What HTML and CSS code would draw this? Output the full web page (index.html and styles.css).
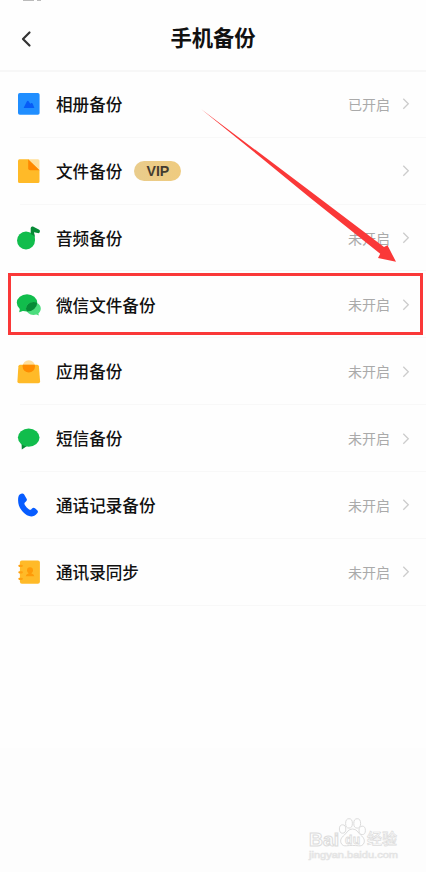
FILE: index.html
```html
<!DOCTYPE html>
<html lang="zh-CN">
<head>
<meta charset="utf-8">
<title>手机备份</title>
<link rel="stylesheet" href="styles.css">
</head>
<body>
<main class="screen">
  <header class="header">
    <svg class="back" viewBox="0 0 12 18"><path d="M9.5 2.5 3 9l6.5 6.5"/></svg>
    <h1 class="title">手机备份</h1>
    <span class="clip-a"></span><span class="clip-b"></span>
  </header>
  <ul class="list">
    <li class="row">
      <svg class="icon" viewBox="0 0 28 28"><rect x="3" y="3" width="21.6" height="21.7" rx="1.8" fill="#208eff"/><path d="M8.6 18 11.8 11.6q.9-1.8 2 0l1.4 2.1 1.2-.7q.8-.3 1.2.5l1.8 4.5z" fill="#075cf7"/></svg>
      <span class="name">相册备份</span><span class="status">已开启</span>
      <svg class="chevron" viewBox="0 0 8 14"><path d="m1.3 1.8 5 5-5 5"/></svg>
    </li>
    <li class="row">
      <svg class="icon" viewBox="0 0 28 28"><path d="M4.5 2.3H13.5L24.5 13V24.5q0 1.6-1.6 1.6H4.6Q3 26.1 3 24.5V3.9q0-1.6 1.5-1.6z" fill="#ffba28"/><path d="M13 2.3h9.9q1.6 0 1.6 1.6V13z" fill="#ffdf9b"/><path d="M13.2 2.3 24.5 13.2h-9.3q-2 0-2-2z" fill="#ff8800"/></svg>
      <span class="name">文件备份</span><span class="vip">VIP</span><span class="status"></span>
      <svg class="chevron" viewBox="0 0 8 14"><path d="m1.3 1.8 5 5-5 5"/></svg>
    </li>
    <li class="row">
      <svg class="icon" viewBox="0 0 28 28"><circle cx="11" cy="16.5" r="9" fill="#11bd4c"/><path d="m15.7 8.5 3.1-.2q1.1 4 1.2 8.2h-4z" fill="#11bd4c"/><path d="M15.7 4q.3-2 2.3-1.4l5.8 2.9q1.4.6 1.1 2.3-.4 1.7-2.1 1.3l-3.9-.8 1 4.8q-1.5-2.2-4.2-3.2z" fill="#078b36"/></svg>
      <span class="name">音频备份</span><span class="status">未开启</span>
      <svg class="chevron" viewBox="0 0 8 14"><path d="m1.3 1.8 5 5-5 5"/></svg>
    </li>
    <li class="row">
      <svg class="icon" viewBox="0 0 28 28"><defs><clipPath id="bubble"><ellipse cx="12" cy="11.8" rx="10.2" ry="8.6"/></clipPath></defs><ellipse cx="12" cy="11.8" rx="10.2" ry="8.6" fill="#11bd4c"/><path d="m5 17-.8 4.3 5-1.8z" fill="#11bd4c"/><path d="M25.8 17.5c0 2-1 3.7-2.4 4.9l.5 2.2-2.7-1.1c-5 1.6-10.2-1.6-10.2-6 0-3.7 3.3-6.3 7.4-6.3s7.4 2.6 7.4 6.3z" fill="#4cdd7d"/><ellipse cx="18.4" cy="17.4" rx="7.4" ry="6.3" fill="#078b36" clip-path="url(#bubble)"/></svg>
      <span class="name">微信文件备份</span><span class="status">未开启</span>
      <svg class="chevron" viewBox="0 0 8 14"><path d="m1.3 1.8 5 5-5 5"/></svg>
    </li>
    <li class="row">
      <svg class="icon" viewBox="0 0 28 28"><defs><clipPath id="bag"><path d="M0 6.8h28V28H0z"/></clipPath></defs><circle cx="13.8" cy="8.4" r="6.2" fill="#ffdf9b"/><path d="M5 6.8h17.2q1.5 0 1.7 1.5l1.2 15q.1 1.9-1.8 1.9H4.2q-1.9 0-1.8-1.9l1-15Q3.5 6.8 5 6.8z" fill="#ffba28"/><circle cx="13.8" cy="8.4" r="6.2" fill="#ff8c00" clip-path="url(#bag)"/></svg>
      <span class="name">应用备份</span><span class="status">未开启</span>
      <svg class="chevron" viewBox="0 0 8 14"><path d="m1.3 1.8 5 5-5 5"/></svg>
    </li>
    <li class="row">
      <svg class="icon" viewBox="0 0 28 28"><path d="M6.5 17 6.8 24.6 13.5 20z" fill="#078b36"/><ellipse cx="13.7" cy="12.6" rx="10.8" ry="9.1" fill="#11bd4c"/></svg>
      <span class="name">短信备份</span><span class="status">未开启</span>
      <svg class="chevron" viewBox="0 0 8 14"><path d="m1.3 1.8 5 5-5 5"/></svg>
    </li>
    <li class="row">
      <svg class="icon" viewBox="0 0 28 28"><path d="M4.7 3.5C6.3 2.2 8.2 2 9 3.3l2.6 4.4c.7 1.2.2 2.2-.9 3l-.8.7c-.8.7-.6 1.8.1 2.9 1 1.5 2.3 2.9 3.8 3.9 1 .7 1.9.8 2.6 0l.6-.7c1-1 2-1 3-.2l2.2 2c1 .9.9 2 0 3-4.4 5.3-10 3.2-14.2-1.2-3.3-3.5-5-7.8-4.9-12 0-2.2.2-4.4 1.6-5.6z" fill="#075cff"/></svg>
      <span class="name">通话记录备份</span><span class="status">未开启</span>
      <svg class="chevron" viewBox="0 0 8 14"><path d="m1.3 1.8 5 5-5 5"/></svg>
    </li>
    <li class="row">
      <svg class="icon" viewBox="0 0 28 28"><rect x="4.9" y="2.5" width="20" height="23.2" rx="2" fill="#ffba28"/><path d="M4.4 7.8h2.4M4.4 14.3h2.4M4.4 20.8h2.4" stroke="#ffa010" stroke-width="2.2" stroke-linecap="round"/><circle cx="15" cy="12.2" r="3" fill="#ff9a08"/><path d="M13.5 14h3v1.4q2.4.4 2.8 2.8h-8.6q.4-2.4 2.8-2.8z" fill="#ff9a08"/></svg>
      <span class="name">通讯录同步</span><span class="status">未开启</span>
      <svg class="chevron" viewBox="0 0 8 14"><path d="m1.3 1.8 5 5-5 5"/></svg>
    </li>
  </ul>
  <div class="highlight"></div>
  <svg class="arrow" viewBox="0 0 196 154"><path d="M0 0 109 82 183 138 186.5 136.3 195 152.8 177 149 179.2 144.8 109 88.8 58 47z"/></svg>
  <div class="watermark">
    <svg class="mark" viewBox="0 0 90 42">
      <g class="outline">
        <text x="0" y="27.5" class="latin" textLength="30" lengthAdjust="spacingAndGlyphs">Bai</text>
        <path d="M43.5 11c-4.4 0-5.5 3.7-8 5.9-3.4 2.8-4.5 5.2-3.5 8 1 2.6 3.2 3.2 5.5 2.9 4-.5 8-.5 12 0 2.3.3 4.5-.3 5.5-2.9 1-2.8-.1-5.2-3.5-8-2.5-2.2-3.6-5.9-8-5.9z"/>
        <ellipse cx="33.6" cy="11" rx="3.2" ry="4.2"/><ellipse cx="40" cy="5.4" rx="3.4" ry="4.7"/><ellipse cx="48.2" cy="5.4" rx="3.4" ry="4.7"/><ellipse cx="53.2" cy="12.4" rx="3.2" ry="4.2"/>
        <text x="36" y="25.5" class="du" textLength="15">du</text>
        <text x="58" y="26" class="han" textLength="30">经验</text>
      </g>
      <text x="0" y="39.5" class="url" textLength="89" lengthAdjust="spacingAndGlyphs">jingyan.baidu.com</text>
    </svg>
  </div>
</main>
</body>
</html>
```
FILE: styles.css
```css
* { box-sizing: border-box; }
body { margin: 0; background: #fdfdfd; font-family: "Noto Sans CJK SC", sans-serif; }
.screen { position: relative; width: 426px; height: 872px; overflow: hidden; background: linear-gradient(#fefefe 748px, #fdfdfd 748px); }
.header { position: relative; display: flex; align-items: center; justify-content: center; height: 72px; padding-top: 4px; border-bottom: 2px solid #f7f7f7; }
.back { position: absolute; left: 20px; top: 30px; width: 12px; height: 18px; fill: none; stroke: #333; stroke-width: 2.2; stroke-linecap: round; stroke-linejoin: round; }
.title { margin: 0; font-size: 21.3px; line-height: 32px; font-weight: 700; color: #111; }
.clip-a, .clip-b { position: absolute; top: 0; height: 1px; background: #bbb; }
.clip-a { left: 23px; width: 11px; }
.clip-b { left: 37px; width: 4px; }
.list { list-style: none; margin: -1px 0 0; padding: 0; }
.row { position: relative; display: flex; align-items: center; height: 66.84px; padding: 0 16px 0 15px; }
.row::after { content: ""; position: absolute; left: 20px; right: 0; bottom: 0; height: 1px; background: #f8f8f8; }
.icon { width: 28px; height: 28px; flex: none; }
.name { margin-left: 13px; padding-bottom: .5px; font-size: 16.6px; line-height: 24px; font-weight: 500; color: #111; white-space: nowrap; }
.vip { width: 47px; height: 20px; margin-left: 12px; border-radius: 10px; background: linear-gradient(90deg, #e9cc8c, #efcb7f); font: 700 14.2px/21px "Liberation Sans", sans-serif; color: #443c30; text-align: center; }
.status { margin-left: auto; padding-bottom: 1px; font-size: 14px; line-height: 20px; color: #aaa; }
.chevron { width: 8px; height: 14px; margin-left: 12px; fill: none; stroke: #ccc; stroke-width: 1.3; }
.highlight { position: absolute; left: 8px; top: 273px; width: 415px; height: 62px; border: 3px solid #fa3838; }
.arrow { position: absolute; left: 201px; top: 109px; width: 196px; height: 154px; fill: #fa3838; }
.watermark { position: absolute; left: 309px; top: 818px; }
.mark { display: block; width: 90px; height: 42px; overflow: visible; }
.outline { fill: #fefefe; stroke: #dcdcdc; stroke-width: 1; }
.latin { font: 700 18.5px "Liberation Sans", sans-serif; }
.du { font: 700 12px "Liberation Sans", sans-serif; stroke-width: .8; }
.han { font: 500 15px "Noto Sans CJK SC", sans-serif; stroke-width: .7; }
.url { font: 400 9.5px "Liberation Sans", sans-serif; fill: #fdfdfd; stroke: #e4e4e4; stroke-width: .7; }
```
